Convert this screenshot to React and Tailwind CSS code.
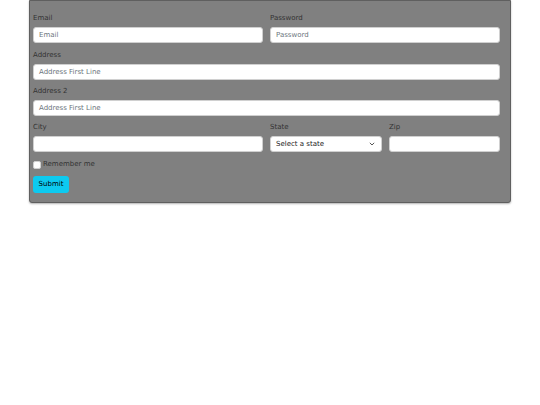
import React from "react";

function Label({ children }) {
  return <div className="h-[9px] mb-[4px] leading-[9px] text-[7px] text-[#333333]">{children}</div>;
}

function Input({ placeholder, className = "" }) {
  return (
    <div className={"h-[16px] bg-white rounded-[3px] border border-[#d0d0d0] flex items-center px-[5px] text-[7px] text-[#6c757d] " + className}>
      {placeholder}
    </div>
  );
}

export default function App() {
  return (
    <div className="w-[540px] h-[405px] bg-white" style={{ fontFamily: '"DejaVu Sans", sans-serif' }}>
      <div className="ml-[29px] w-[482px] bg-[#808080] border border-[#5f5f5f] rounded-b-[3px] shadow-[0_1px_2px_rgba(0,0,0,0.3)] pl-[3px] pr-[10px] pt-[13px] pb-[9px]">
        <div className="flex gap-[7px]">
          <div className="flex-1">
            <Label>Email</Label>
            <Input placeholder="Email" />
          </div>
          <div className="flex-1">
            <Label>Password</Label>
            <Input placeholder="Password" />
          </div>
        </div>
        <div className="mt-[8px]">
          <Label>Address</Label>
          <Input placeholder="Address First Line" />
        </div>
        <div className="mt-[7px]">
          <Label>Address 2</Label>
          <Input placeholder="Address First Line" />
        </div>
        <div className="mt-[7px] flex gap-[7px]">
          <div className="w-[230px]">
            <Label>City</Label>
            <Input />
          </div>
          <div className="w-[112px]">
            <Label>State</Label>
            <div className="h-[16px] bg-white rounded-[3px] border border-[#d0d0d0] flex items-center justify-between px-[5px] text-[7px] text-[#222222]">
              <span>Select a state</span>
              <svg width="6" height="4" viewBox="0 0 6 4" className="mr-[1px]">
                <path d="M0.8 0.8 L3 3 L5.2 0.8" stroke="#444" strokeWidth="0.9" fill="none" />
              </svg>
            </div>
          </div>
          <div className="flex-1">
            <Label>Zip</Label>
            <Input />
          </div>
        </div>
        <div className="mt-[8px] flex items-center gap-[2px] h-[9px]">
          <div className="w-[8px] h-[8px] bg-white rounded-[2px] border border-[#d0d0d0]"></div>
          <span className="text-[7px] leading-[9px] text-[#333333]">Remember me</span>
        </div>
        <div className="mt-[7px] w-[36px] h-[17px] bg-[#0dcaf0] rounded-[3px] flex items-center justify-center text-[7px] text-black">
          Submit
        </div>
      </div>
    </div>
  );
}
